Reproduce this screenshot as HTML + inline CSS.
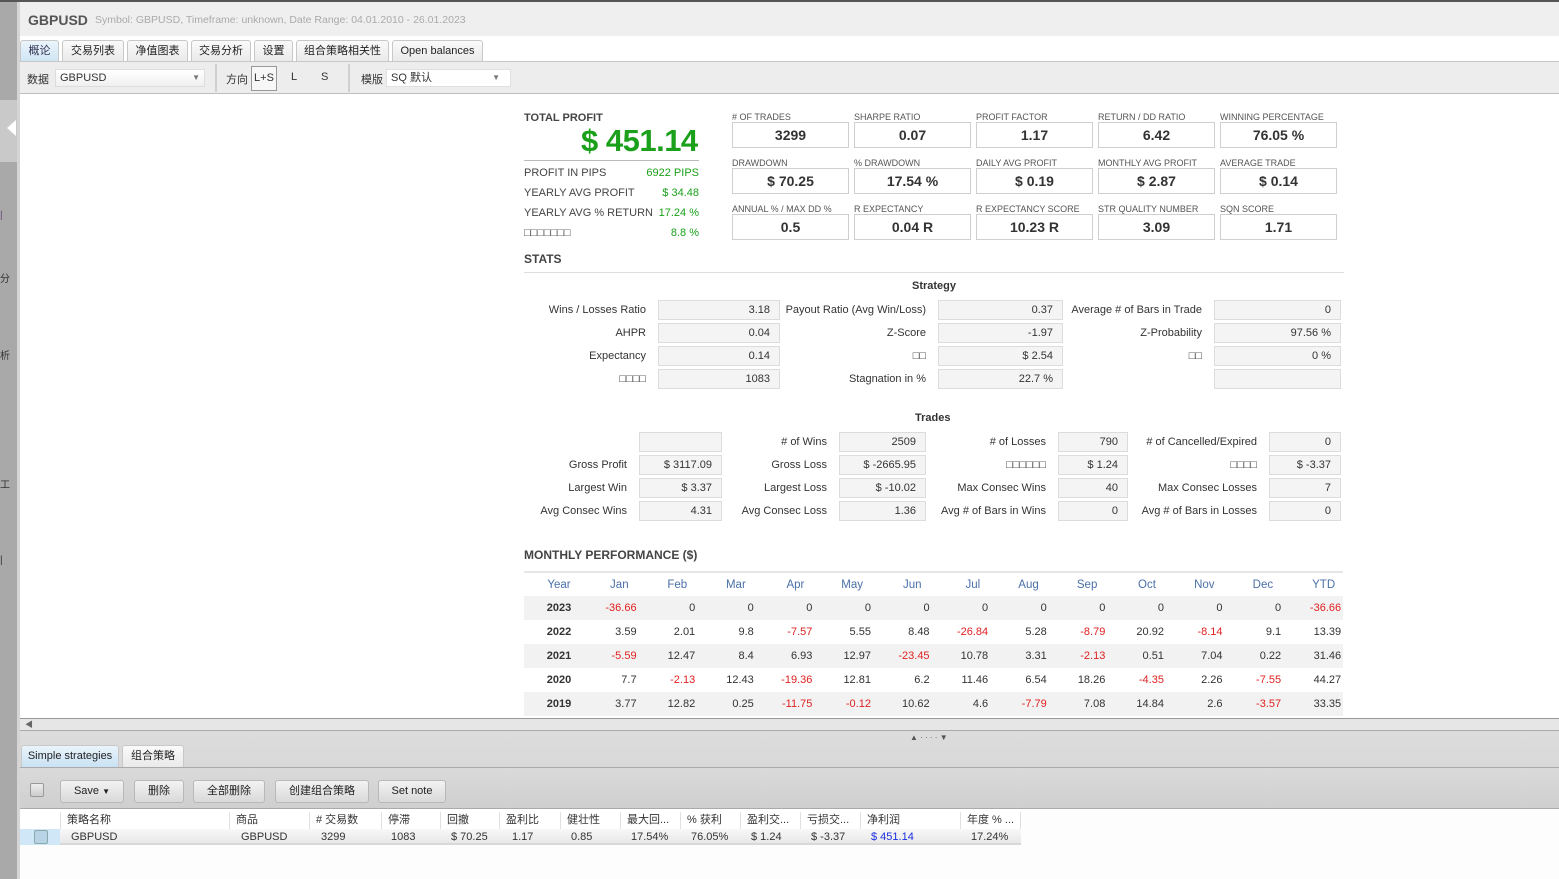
<!DOCTYPE html>
<html><head><meta charset="utf-8">
<style>
*{margin:0;padding:0;box-sizing:border-box}
body{width:1559px;height:879px;overflow:hidden;position:relative;background:#fff;font-family:"Liberation Sans","Noto Sans CJK SC",sans-serif;font-size:11px;color:#333}
.a{position:absolute;white-space:nowrap}
.tab{position:absolute;top:40px;height:22px;border:1px solid #c8c8c8;border-bottom:none;border-radius:3px 3px 0 0;background:linear-gradient(#fafafa,#e9e9e9);font-size:11px;line-height:20px;text-align:center;color:#222}
.lbl{position:absolute;font-size:9px;color:#555;text-transform:uppercase}
.box{position:absolute;width:117px;height:26px;border:1px solid #cfcfcf;background:#fff;font-weight:bold;font-size:14px;text-align:center;line-height:24px;color:#333}
.sb{position:absolute;height:20px;border:1px solid #dcdcdc;background:#f4f4f4;text-align:right;padding-right:9px;line-height:18px;font-size:11px}
.sl{position:absolute;text-align:right;font-size:11px;line-height:20px}
.btn{position:absolute;top:780px;height:23px;border:1px solid #b8b8b8;border-radius:3px;background:linear-gradient(#f3f3f3,#d9d9d9);font-size:11px;line-height:21px;text-align:center;color:#222}
table.m{position:absolute;left:524px;top:571px;width:819px;border-collapse:collapse;border-top:2px solid #e6e6e6;table-layout:fixed}
table.m td{height:24px;text-align:right;padding-right:16px;font-size:11px;color:#333;width:58.6px}
table.m tr.h td{color:#4a70a8;padding-right:24px;font-size:11.5px}
table.m td:first-child{text-align:center;font-weight:bold;padding:0;width:70px}
table.m tr.h td:first-child{font-weight:normal;padding:0}
table.m td:last-child{width:46px;padding-right:2px}
table.m tr.h td:last-child{padding-right:8px}
table.m tr.g td{background:#f2f2f2}
.r{color:#e02020!important}
.th{position:absolute;top:812px;height:17px;line-height:17px;font-size:11px;border-left:1px solid #e0e0e0;padding-left:6px}
.td{position:absolute;top:829px;height:16px;line-height:16px;font-size:11px}
</style></head><body>
<div class="a" style="left:0;top:0;width:1559px;height:2px;background:#555"></div>
<div class="a" style="left:0;top:2px;width:17px;height:877px;background:#a9a9a9"></div>
<div class="a" style="left:0;top:100px;width:17px;height:62px;background:#c9c9c9"></div>
<div class="a" style="left:7px;top:120px;width:0;height:0;border-top:8px solid transparent;border-bottom:8px solid transparent;border-right:9px solid #fff"></div>
<div class="a" style="left:17px;top:2px;width:3px;height:877px;background:#d5d5d5"></div>
<div class="a" style="left:0;top:210px;font-size:10px;color:#6a4a7a">|</div>
<div class="a" style="left:0;top:270px;font-size:10px">分</div>
<div class="a" style="left:0;top:347px;font-size:10px">析</div>
<div class="a" style="left:0;top:476px;font-size:10px">工</div>
<div class="a" style="left:0;top:555px;font-size:10px">|</div>
<div class="a" style="left:20px;top:2px;width:1539px;height:34px;background:#efefef"></div>
<div class="a" style="left:28px;top:12px;font-size:14px;font-weight:bold;color:#555">GBPUSD</div>
<div class="a" style="left:95px;top:14px;font-size:10.5px;color:#aaa">Symbol: GBPUSD, Timeframe: unknown, Date Range: 04.01.2010 - 26.01.2023</div>
<div class="tab" style="left:20px;width:39px;background:linear-gradient(#eaf4fb,#cfe5f4);color:#335">概论</div>
<div class="tab" style="left:62px;width:62px">交易列表</div>
<div class="tab" style="left:127px;width:61px">净值图表</div>
<div class="tab" style="left:191px;width:60px">交易分析</div>
<div class="tab" style="left:254px;width:39px">设置</div>
<div class="tab" style="left:296px;width:93px">组合策略相关性</div>
<div class="tab" style="left:392px;width:91px">Open balances</div>
<div class="a" style="left:20px;top:61px;width:1539px;height:33px;background:#ededed;border-top:1px solid #c8c8c8;border-bottom:1px solid #bdbdbd"></div>
<div class="a" style="left:27px;top:71px">数据</div>
<div class="a" style="left:55px;top:69px;width:150px;height:18px;background:linear-gradient(#fff,#f0f0f0);border:1px solid #ddd;padding-left:4px;line-height:16px">GBPUSD<span style="position:absolute;right:4px;font-size:8px;color:#777">▼</span></div>
<div class="a" style="left:215px;top:64px;width:2px;height:28px;background:#d0d0d0"></div>
<div class="a" style="left:226px;top:71px">方向</div>
<div class="a" style="left:251px;top:66px;width:26px;height:25px;border:1px solid #999;background:#f7f7f7;text-align:center;line-height:23px">L+S</div>
<div class="a" style="left:291px;top:71px">L</div>
<div class="a" style="left:321px;top:71px">S</div>
<div class="a" style="left:348px;top:64px;width:2px;height:28px;background:#d0d0d0"></div>
<div class="a" style="left:361px;top:71px">模版</div>
<div class="a" style="left:386px;top:69px;width:125px;height:18px;background:#fff;border:1px solid #e0e0e0;padding-left:4px;line-height:16px">SQ 默认<span style="position:absolute;right:10px;font-size:8px;color:#777">▼</span></div>

<div class="a" style="left:524px;top:112px;font-weight:bold;font-size:11px;color:#444">TOTAL PROFIT</div>
<div class="a" style="left:581px;top:123px;font-weight:bold;font-size:31px;color:#1aa01a;letter-spacing:-0.5px">$ 451.14</div>
<div class="a" style="left:524px;top:160px;width:175px;height:1px;background:#bbb"></div>
<div class="a" style="left:524px;top:167px;font-size:11px;color:#444">PROFIT IN PIPS</div>
<div class="a" style="right:860px;top:167px;color:#1aa01a">6922 PIPS</div>
<div class="a" style="left:524px;top:187px;color:#444">YEARLY AVG PROFIT</div>
<div class="a" style="right:860px;top:187px;color:#1aa01a">$ 34.48</div>
<div class="a" style="left:524px;top:207px;color:#444">YEARLY AVG % RETURN</div>
<div class="a" style="right:860px;top:207px;color:#1aa01a">17.24 %</div>
<div class="a" style="left:524px;top:227px;color:#444">□□□□□□□</div>
<div class="a" style="right:860px;top:227px;color:#1aa01a">8.8 %</div>

<div class="lbl" style="left:732px;top:112px"># OF TRADES</div><div class="box" style="left:732px;top:122px">3299</div>
<div class="lbl" style="left:854px;top:112px">SHARPE RATIO</div><div class="box" style="left:854px;top:122px">0.07</div>
<div class="lbl" style="left:976px;top:112px">PROFIT FACTOR</div><div class="box" style="left:976px;top:122px">1.17</div>
<div class="lbl" style="left:1098px;top:112px">RETURN / DD RATIO</div><div class="box" style="left:1098px;top:122px">6.42</div>
<div class="lbl" style="left:1220px;top:112px">WINNING PERCENTAGE</div><div class="box" style="left:1220px;top:122px">76.05 %</div>
<div class="lbl" style="left:732px;top:158px">DRAWDOWN</div><div class="box" style="left:732px;top:168px">$ 70.25</div>
<div class="lbl" style="left:854px;top:158px">% DRAWDOWN</div><div class="box" style="left:854px;top:168px">17.54 %</div>
<div class="lbl" style="left:976px;top:158px">DAILY AVG PROFIT</div><div class="box" style="left:976px;top:168px">$ 0.19</div>
<div class="lbl" style="left:1098px;top:158px">MONTHLY AVG PROFIT</div><div class="box" style="left:1098px;top:168px">$ 2.87</div>
<div class="lbl" style="left:1220px;top:158px">AVERAGE TRADE</div><div class="box" style="left:1220px;top:168px">$ 0.14</div>
<div class="lbl" style="left:732px;top:204px">ANNUAL % / MAX DD %</div><div class="box" style="left:732px;top:214px">0.5</div>
<div class="lbl" style="left:854px;top:204px">R EXPECTANCY</div><div class="box" style="left:854px;top:214px">0.04 R</div>
<div class="lbl" style="left:976px;top:204px">R EXPECTANCY SCORE</div><div class="box" style="left:976px;top:214px">10.23 R</div>
<div class="lbl" style="left:1098px;top:204px">STR QUALITY NUMBER</div><div class="box" style="left:1098px;top:214px">3.09</div>
<div class="lbl" style="left:1220px;top:204px">SQN SCORE</div><div class="box" style="left:1220px;top:214px">1.71</div>

<div class="a" style="left:524px;top:252px;font-weight:bold;font-size:12px;color:#444">STATS</div>
<div class="a" style="left:524px;top:272px;width:820px;height:1px;background:#ddd"></div>
<div class="a" style="left:912px;top:280px;font-weight:bold">Strategy</div>

<div class="sl" style="right:913px;top:300px">Wins / Losses Ratio</div><div class="sb" style="left:658px;top:300px;width:122px">3.18</div>
<div class="sl" style="right:633px;top:300px">Payout Ratio (Avg Win/Loss)</div><div class="sb" style="left:938px;top:300px;width:125px">0.37</div>
<div class="sl" style="right:357px;top:300px">Average # of Bars in Trade</div><div class="sb" style="left:1214px;top:300px;width:127px">0</div>
<div class="sl" style="right:913px;top:323px">AHPR</div><div class="sb" style="left:658px;top:323px;width:122px">0.04</div>
<div class="sl" style="right:633px;top:323px">Z-Score</div><div class="sb" style="left:938px;top:323px;width:125px">-1.97</div>
<div class="sl" style="right:357px;top:323px">Z-Probability</div><div class="sb" style="left:1214px;top:323px;width:127px">97.56 %</div>
<div class="sl" style="right:913px;top:346px">Expectancy</div><div class="sb" style="left:658px;top:346px;width:122px">0.14</div>
<div class="sl" style="right:633px;top:346px">□□</div><div class="sb" style="left:938px;top:346px;width:125px">$ 2.54</div>
<div class="sl" style="right:357px;top:346px">□□</div><div class="sb" style="left:1214px;top:346px;width:127px">0 %</div>
<div class="sl" style="right:913px;top:369px">□□□□</div><div class="sb" style="left:658px;top:369px;width:122px">1083</div>
<div class="sl" style="right:633px;top:369px">Stagnation in %</div><div class="sb" style="left:938px;top:369px;width:125px">22.7 %</div>
<div class="sb" style="left:1214px;top:369px;width:127px"></div>

<div class="a" style="left:915px;top:412px;font-weight:bold">Trades</div>
<div class="sb" style="left:639px;top:432px;width:83px"></div>
<div class="sl" style="right:732px;top:432px"># of Wins</div><div class="sb" style="left:839px;top:432px;width:87px">2509</div>
<div class="sl" style="right:513px;top:432px"># of Losses</div><div class="sb" style="left:1058px;top:432px;width:70px">790</div>
<div class="sl" style="right:302px;top:432px"># of Cancelled/Expired</div><div class="sb" style="left:1269px;top:432px;width:72px">0</div>
<div class="sl" style="right:932px;top:455px">Gross Profit</div><div class="sb" style="left:639px;top:455px;width:83px">$ 3117.09</div>
<div class="sl" style="right:732px;top:455px">Gross Loss</div><div class="sb" style="left:839px;top:455px;width:87px">$ -2665.95</div>
<div class="sl" style="right:513px;top:455px">□□□□□□</div><div class="sb" style="left:1058px;top:455px;width:70px">$ 1.24</div>
<div class="sl" style="right:302px;top:455px">□□□□</div><div class="sb" style="left:1269px;top:455px;width:72px">$ -3.37</div>
<div class="sl" style="right:932px;top:478px">Largest Win</div><div class="sb" style="left:639px;top:478px;width:83px">$ 3.37</div>
<div class="sl" style="right:732px;top:478px">Largest Loss</div><div class="sb" style="left:839px;top:478px;width:87px">$ -10.02</div>
<div class="sl" style="right:513px;top:478px">Max Consec Wins</div><div class="sb" style="left:1058px;top:478px;width:70px">40</div>
<div class="sl" style="right:302px;top:478px">Max Consec Losses</div><div class="sb" style="left:1269px;top:478px;width:72px">7</div>
<div class="sl" style="right:932px;top:501px">Avg Consec Wins</div><div class="sb" style="left:639px;top:501px;width:83px">4.31</div>
<div class="sl" style="right:732px;top:501px">Avg Consec Loss</div><div class="sb" style="left:839px;top:501px;width:87px">1.36</div>
<div class="sl" style="right:513px;top:501px">Avg # of Bars in Wins</div><div class="sb" style="left:1058px;top:501px;width:70px">0</div>
<div class="sl" style="right:302px;top:501px">Avg # of Bars in Losses</div><div class="sb" style="left:1269px;top:501px;width:72px">0</div>

<div class="a" style="left:524px;top:548px;font-weight:bold;font-size:12px;color:#444">MONTHLY PERFORMANCE ($)</div>
<table class="m">
<tr class="h"><td>Year</td><td>Jan</td><td>Feb</td><td>Mar</td><td>Apr</td><td>May</td><td>Jun</td><td>Jul</td><td>Aug</td><td>Sep</td><td>Oct</td><td>Nov</td><td>Dec</td><td>YTD</td></tr>
<tr class="g"><td>2023</td><td class="r">-36.66</td><td>0</td><td>0</td><td>0</td><td>0</td><td>0</td><td>0</td><td>0</td><td>0</td><td>0</td><td>0</td><td>0</td><td class="r">-36.66</td></tr>
<tr><td>2022</td><td>3.59</td><td>2.01</td><td>9.8</td><td class="r">-7.57</td><td>5.55</td><td>8.48</td><td class="r">-26.84</td><td>5.28</td><td class="r">-8.79</td><td>20.92</td><td class="r">-8.14</td><td>9.1</td><td>13.39</td></tr>
<tr class="g"><td>2021</td><td class="r">-5.59</td><td>12.47</td><td>8.4</td><td>6.93</td><td>12.97</td><td class="r">-23.45</td><td>10.78</td><td>3.31</td><td class="r">-2.13</td><td>0.51</td><td>7.04</td><td>0.22</td><td>31.46</td></tr>
<tr><td>2020</td><td>7.7</td><td class="r">-2.13</td><td>12.43</td><td class="r">-19.36</td><td>12.81</td><td>6.2</td><td>11.46</td><td>6.54</td><td>18.26</td><td class="r">-4.35</td><td>2.26</td><td class="r">-7.55</td><td>44.27</td></tr>
<tr class="g"><td>2019</td><td>3.77</td><td>12.82</td><td>0.25</td><td class="r">-11.75</td><td class="r">-0.12</td><td>10.62</td><td>4.6</td><td class="r">-7.79</td><td>7.08</td><td>14.84</td><td>2.6</td><td class="r">-3.57</td><td>33.35</td></tr>
</table>

<div class="a" style="left:20px;top:718px;width:1539px;height:13px;background:#e6e6e6;border-top:1px solid #999;border-bottom:1px solid #aaa"></div>
<div class="a" style="left:25px;top:719px;font-size:8px;color:#666">◀</div>
<div class="a" style="left:20px;top:731px;width:1539px;height:148px;background:linear-gradient(#dcdcdc,#d0d0d0)"></div>
<div class="a" style="left:910px;top:733px;font-size:8px;color:#555">▲ · · · · ▼</div>
<div class="tab" style="left:21px;top:745px;width:98px;height:23px;background:linear-gradient(#eaf4fb,#c7e1f3)">Simple strategies</div>
<div class="tab" style="left:122px;top:745px;width:62px;height:23px">组合策略</div>
<div class="a" style="left:20px;top:767px;width:1539px;height:1px;background:#aaa"></div>
<div class="a" style="left:20px;top:768px;width:1539px;height:40px;background:linear-gradient(#dadada,#cfcfcf)"></div>
<div class="a" style="left:30px;top:783px;width:14px;height:14px;border:1px solid #999;border-radius:2px;background:linear-gradient(#eee,#ccc)"></div>
<div class="btn" style="left:60px;width:64px">Save <span style="font-size:8px">▼</span></div>
<div class="btn" style="left:134px;width:50px">删除</div>
<div class="btn" style="left:193px;width:72px">全部删除</div>
<div class="btn" style="left:275px;width:94px">创建组合策略</div>
<div class="btn" style="left:378px;width:68px">Set note</div>
<div class="a" style="left:20px;top:808px;width:1539px;height:1px;background:#aaa"></div>
<div class="a" style="left:20px;top:809px;width:1539px;height:70px;background:#fdfdfd"></div>
<div class="a" style="left:20px;top:809px;width:1001px;height:20px;background:#fff"></div>
<div class="th" style="left:60px">策略名称</div>
<div class="th" style="left:229px">商品</div>
<div class="th" style="left:309px"># 交易数</div>
<div class="th" style="left:381px">停滞</div>
<div class="th" style="left:440px">回撤</div>
<div class="th" style="left:499px">盈利比</div>
<div class="th" style="left:560px">健壮性</div>
<div class="th" style="left:620px">最大回...</div>
<div class="th" style="left:680px">% 获利</div>
<div class="th" style="left:740px">盈利交...</div>
<div class="th" style="left:800px">亏损交...</div>
<div class="th" style="left:860px">净利润</div>
<div class="th" style="left:960px;border-right:1px solid #e0e0e0;width:61px">年度 % ...</div>
<div class="a" style="left:20px;top:829px;width:1001px;height:16px;background:linear-gradient(#f8f8f8,#e8e8e8);border-bottom:2px solid #d8d8d8"></div>
<div class="a" style="left:20px;top:829px;width:40px;height:16px;background:#cfe7f7"></div>
<div class="a" style="left:34px;top:830px;width:14px;height:14px;border:1px solid #8aa;border-radius:2px;background:#b9d3e6"></div>
<div class="td" style="left:71px">GBPUSD</div>
<div class="td" style="left:241px">GBPUSD</div>
<div class="td" style="left:321px">3299</div>
<div class="td" style="left:391px">1083</div>
<div class="td" style="left:451px">$ 70.25</div>
<div class="td" style="left:512px">1.17</div>
<div class="td" style="left:571px">0.85</div>
<div class="td" style="left:631px">17.54%</div>
<div class="td" style="left:691px">76.05%</div>
<div class="td" style="left:751px">$ 1.24</div>
<div class="td" style="left:811px">$ -3.37</div>
<div class="td" style="left:871px;color:#1a2ee0">$ 451.14</div>
<div class="td" style="left:971px">17.24%</div>
</body></html>
